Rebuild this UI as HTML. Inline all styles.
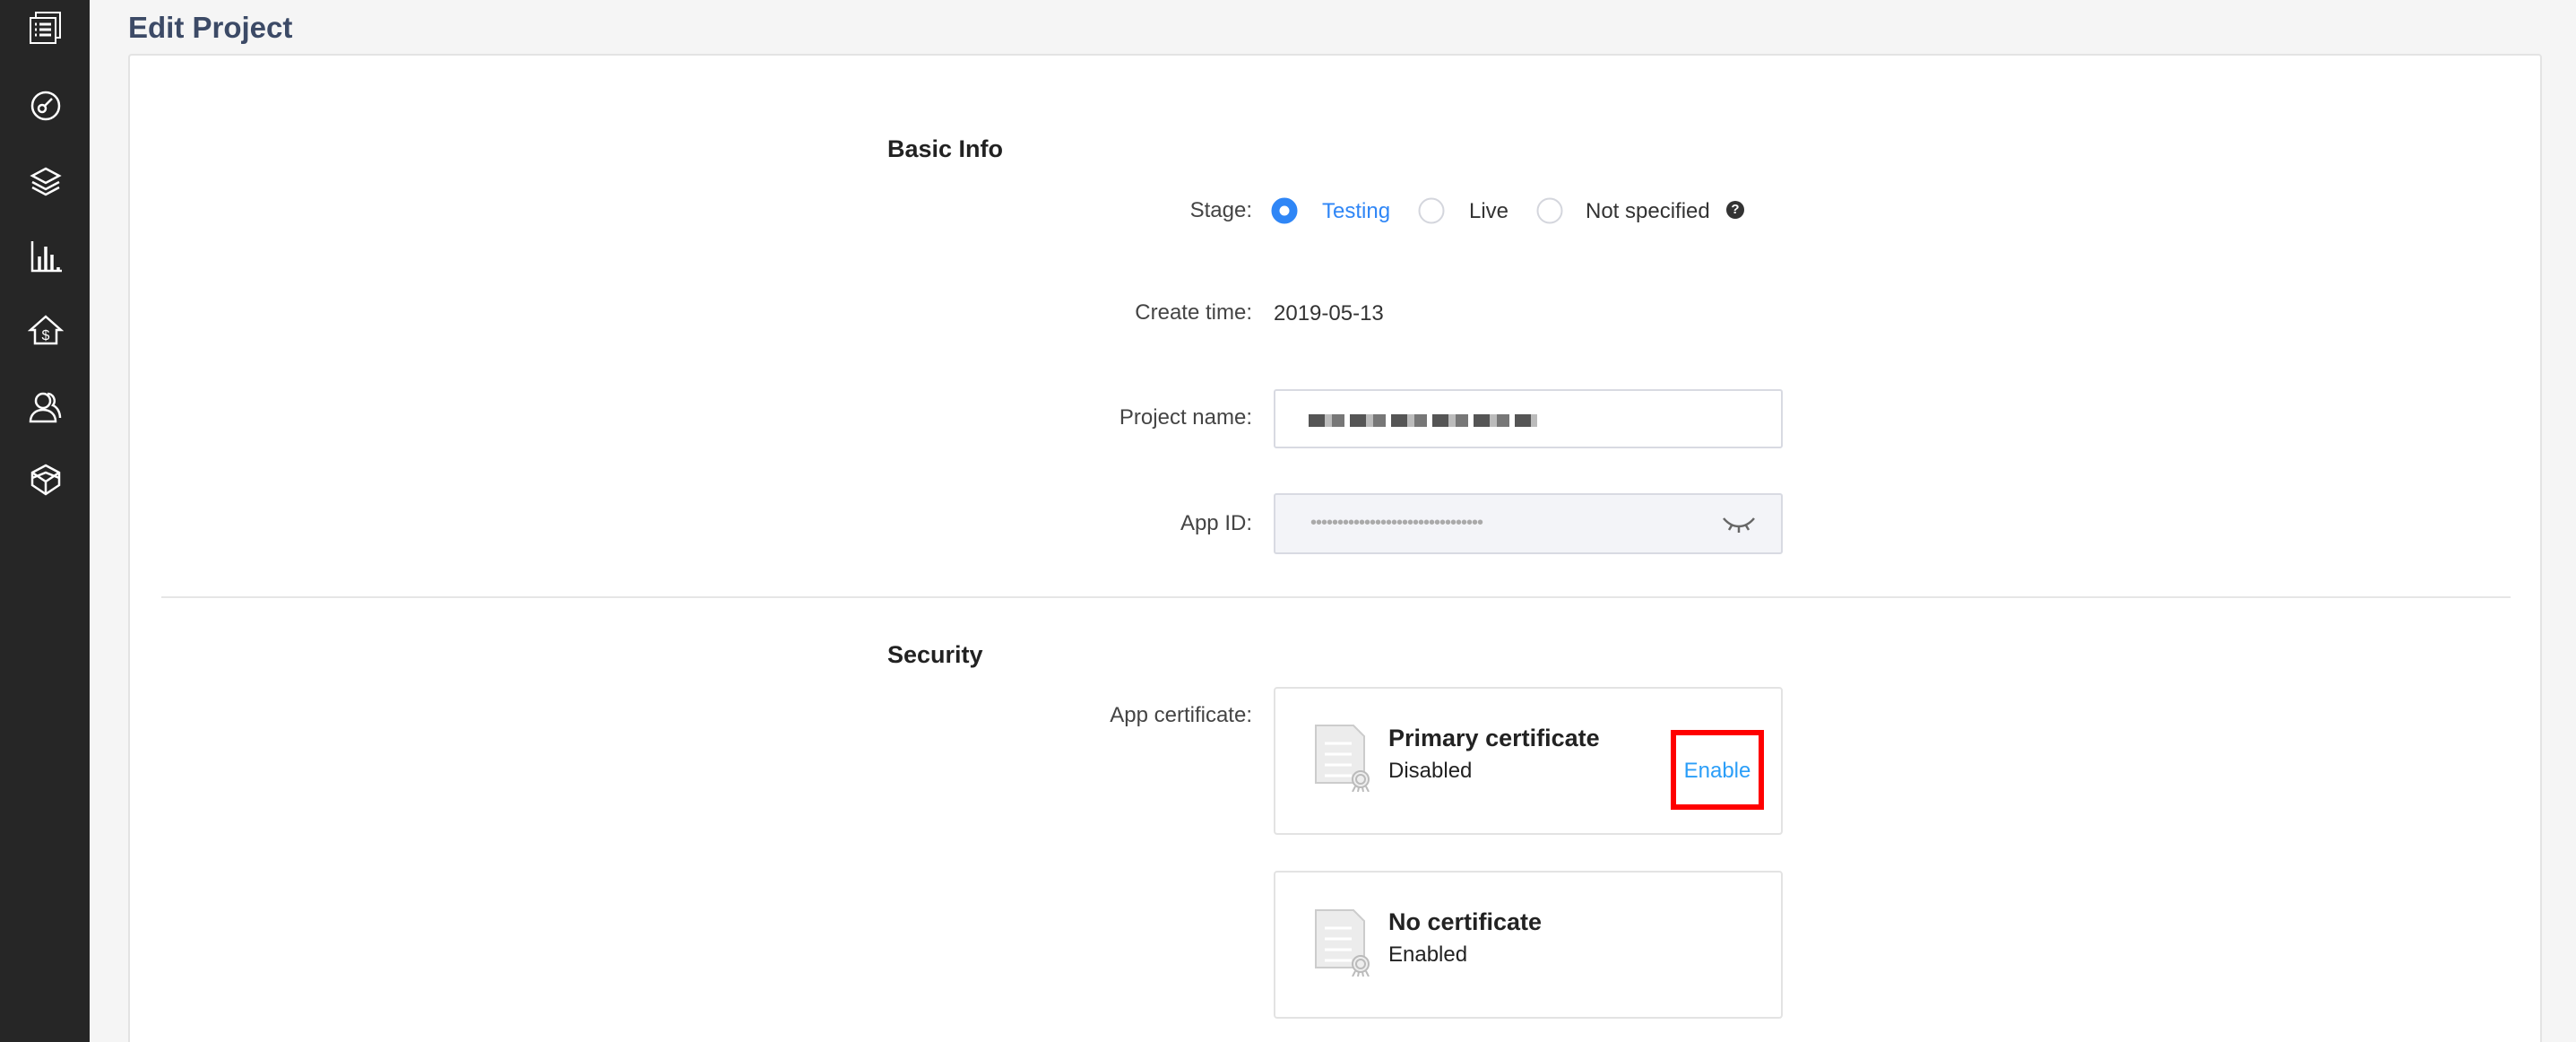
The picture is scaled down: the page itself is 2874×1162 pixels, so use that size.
<!DOCTYPE html>
<html><head><meta charset="utf-8"><style>
*{margin:0;padding:0;box-sizing:border-box}
html,body{width:2874px;height:1162px;overflow:hidden}
body{background:#f5f5f5;font-family:"Liberation Sans",Arial,sans-serif;color:#333}
#w{position:relative;width:2874px;height:1162px;overflow:hidden}
.side{position:absolute;left:0;top:0;width:100px;height:1162px;background:#262626}
.side svg{position:absolute;left:31px;width:40px;height:40px}
.abs{position:absolute;white-space:nowrap}
.card{position:absolute;left:143px;top:60px;width:2693px;height:1140px;background:#fff;border:2px solid #e3e3e3;border-radius:4px}
.lbl{position:absolute;right:1477px;font-size:24px;color:#444;transform:translateY(-50%)}
.h{font-size:27px;font-weight:bold;color:#222}
.radio{position:absolute;width:29px;height:29px;border-radius:50%;border:2px solid #d4d6dd;background:#fff;transform:translate(-50%,-50%)}
.input{position:absolute;left:1421px;width:568px;border:2px solid #d8dae2;border-radius:3px}
.cert{position:absolute;left:1421px;width:568px;height:165px;border:2px solid #e3e3e3;border-radius:4px}
</style></head><body><div id="w">
<div class="side">
<svg style="top:11px" viewBox="0 0 40 40" fill="none" stroke="#fff" stroke-width="2"><rect x="3" y="9" width="28" height="28"/><path d="M9 9V3h27v28h-5"/><path d="M8 16h2M13 16h13M8 22h2M13 22h13M8 28h2M13 28h13" stroke-width="3"/></svg>
<svg style="top:97px" viewBox="0 0 40 40" fill="none" stroke="#fff" stroke-width="2.5"><circle cx="20" cy="21" r="15"/><circle cx="16" cy="24" r="4"/><path d="M19 21l8-8"/></svg>
<svg style="top:182px" viewBox="0 0 40 40" fill="none" stroke="#fff" stroke-width="2.5"><path d="M20 6l15 8-15 8-15-8z"/><path d="M5 21l15 8 15-8"/><path d="M5 27l15 8 15-8"/></svg>
<svg style="top:266px" viewBox="0 0 40 40" fill="none" stroke="#fff" stroke-width="2.5"><path d="M5 3v33h33"/><path d="M13 36V20M20 36V9M27 36V18M34 36v-4" stroke-width="3.5"/></svg>
<svg style="top:348px" viewBox="0 0 40 40" fill="none" stroke="#fff" stroke-width="2.5"><path d="M3 20L20 5l17 15h-5v15H8V20z"/><text x="20" y="31" font-size="16" fill="#fff" stroke="none" text-anchor="middle" font-family="Liberation Sans">$</text></svg>
<svg style="top:433px" viewBox="0 0 40 40" fill="none" stroke="#fff" stroke-width="2.5"><circle cx="17" cy="14" r="8"/><path d="M3 37c0-8 6-13 14-13s14 5 14 13z"/><path d="M22 6a8 8 0 0 1 6 13c5 2 8 8 8 14"/></svg>
<svg style="top:515px" viewBox="0 0 40 40" fill="none" stroke="#fff" stroke-width="2.5"><path d="M20 4l15 8v14l-15 10-15-10V12z"/><path d="M5 12l15 10 15-10M20 22v14M5 18l15-6 15 6"/></svg>
</div>
<div class="abs" style="left:143px;top:12px;font-size:33px;font-weight:bold;color:#3c4a66">Edit Project</div>
<div class="card"></div>
<div class="abs h" style="left:990px;top:151px">Basic Info</div>
<div class="lbl" style="top:235px">Stage:</div>
<div class="radio" style="left:1433px;top:235px;border:9px solid #2f86f6"></div>
<div class="abs" style="left:1475px;top:222px;font-size:24px;color:#2f86f6">Testing</div>
<div class="radio" style="left:1597px;top:235px"></div>
<div class="abs" style="left:1639px;top:222px;font-size:24px;color:#333">Live</div>
<div class="radio" style="left:1729px;top:235px"></div>
<div class="abs" style="left:1769px;top:222px;font-size:24px;color:#333">Not specified</div>
<div class="abs" style="left:1926px;top:224px;width:20px;height:20px;border-radius:50%;background:#333;color:#fff;font-size:15px;font-weight:bold;text-align:center;line-height:20px">?</div>
<div class="lbl" style="top:349px">Create time:</div>
<div class="abs" style="left:1421px;top:336px;font-size:24px;color:#333">2019-05-13</div>
<div class="lbl" style="top:466px">Project name:</div>
<div class="input" style="top:434px;height:66px;background:#fff"></div>
<div class="abs" style="left:1460px;top:462px;width:255px;height:14px;background:repeating-linear-gradient(90deg,#555 0 18px,#bbb 18px 26px,#777 26px 40px,#fff 40px 46px)"></div>
<div class="lbl" style="top:584px">App ID:</div>
<div class="input" style="top:550px;height:68px;background:#f3f4f8"></div>
<div class="abs" style="left:1462px;top:572px;font-size:20px;color:#aaa;letter-spacing:-1px">••••••••••••••••••••••••••••••••</div>
<svg class="abs" style="left:1920px;top:572px" width="40" height="24" viewBox="0 0 40 24" fill="none" stroke="#666" stroke-width="2.5"><path d="M3 6c10 12 24 12 34 0M12 14l-3 5M20 16v6M28 14l3 5"/></svg>
<div class="abs" style="left:180px;top:665px;width:2621px;height:2px;background:#e6e6e6"></div>
<div class="abs h" style="left:990px;top:715px">Security</div>
<div class="lbl" style="top:798px">App certificate:</div>
<div class="cert" style="top:766px"></div>
<div class="cert" style="top:971px"></div>
<svg class="abs" style="left:1466px;top:807px" width="66" height="76" viewBox="0 0 66 76"><path d="M2 2h42l12 12v52H2z" fill="#ececec" stroke="#ccc" stroke-width="2"/><path d="M12 22h30M12 34h30M12 46h30M12 58h30" stroke="#fff" stroke-width="3"/><circle cx="52" cy="62" r="9" fill="#eee" stroke="#bbb" stroke-width="2"/><circle cx="52" cy="62" r="5" fill="none" stroke="#bbb" stroke-width="2"/><path d="M46 70l-3 6M58 70l3 6M50 71l-1 5M54 71l1 5" stroke="#bbb" stroke-width="2"/></svg>
<svg class="abs" style="left:1466px;top:1013px" width="66" height="76" viewBox="0 0 66 76"><path d="M2 2h42l12 12v52H2z" fill="#ececec" stroke="#ccc" stroke-width="2"/><path d="M12 22h30M12 34h30M12 46h30M12 58h30" stroke="#fff" stroke-width="3"/><circle cx="52" cy="62" r="9" fill="#eee" stroke="#bbb" stroke-width="2"/><circle cx="52" cy="62" r="5" fill="none" stroke="#bbb" stroke-width="2"/><path d="M46 70l-3 6M58 70l3 6M50 71l-1 5M54 71l1 5" stroke="#bbb" stroke-width="2"/></svg>
<div class="abs h" style="left:1549px;top:808px">Primary certificate</div>
<div class="abs" style="left:1549px;top:846px;font-size:24px;color:#222">Disabled</div>
<div class="abs" style="left:1864px;top:814px;width:104px;height:89px;border:6px solid #f00"></div>
<div class="abs" style="left:1864px;top:846px;width:104px;text-align:center;font-size:24px;color:#2b9ef8">Enable</div>
<div class="abs h" style="left:1549px;top:1013px">No certificate</div>
<div class="abs" style="left:1549px;top:1051px;font-size:24px;color:#222">Enabled</div>
</div></body></html>
